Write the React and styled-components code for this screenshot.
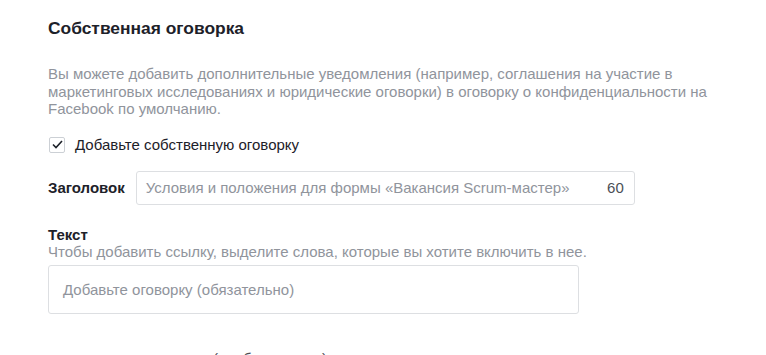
import React from 'react';
import styled, { createGlobalStyle } from 'styled-components';

const GlobalStyle = createGlobalStyle`
  body {
    margin: 0;
    background: #fff;
    font-family: "Liberation Sans", Arial, sans-serif;
    color: #1d2129;
  }
`;

const Page = styled.div`
  padding: 18px 0 0 48px;
  height: 355px;
  overflow: hidden;
  box-sizing: border-box;
`;

const Title = styled.h2`
  margin: 0;
  font-size: 17.4px;
  line-height: 20px;
  font-weight: bold;
  color: #1d2129;
`;

const Description = styled.p`
  margin: 27px 0 0;
  width: 690px;
  font-size: 15px;
  line-height: 17.5px;
  color: #90949c;
`;

const CheckRow = styled.label`
  display: flex;
  align-items: center;
  gap: 10px;
  margin-top: 18px;
  height: 18px;
  font-size: 15px;
  color: #1d2129;
`;

const Box = styled.span`
  width: 16px;
  height: 16px;
  border: 1px solid #ccd0d5;
  border-radius: 2px;
  display: flex;
  align-items: center;
  justify-content: center;
  box-sizing: border-box;
  margin-left: 1px;
`;

const FieldRow = styled.div`
  display: flex;
  align-items: center;
  gap: 11px;
  margin-top: 17px;
`;

const Label = styled.span`
  font-size: 15px;
  font-weight: bold;
  color: #1d2129;
  line-height: ${(p) => p.$lh || '18px'};
  display: block;
`;

const Input = styled.div`
  width: 499px;
  height: 34px;
  box-sizing: border-box;
  border: 1px solid #dddfe2;
  border-radius: 3px;
  display: flex;
  align-items: center;
  justify-content: space-between;
  padding: 0 10px 0 9px;
  font-size: 15px;
`;

const Placeholder = styled.span`
  color: #90949c;
`;

const Counter = styled.span`
  color: #4b4f56;
`;

const Section = styled.div`
  margin-top: 22px;
`;

const Hint = styled.div`
  font-size: 15px;
  line-height: 18px;
  color: #90949c;
`;

const TextArea = styled.div`
  margin-top: 4px;
  width: 531px;
  height: 49px;
  box-sizing: border-box;
  border: 1px solid #dddfe2;
  border-radius: 3px;
  display: flex;
  align-items: center;
  padding: 0 14px;
  font-size: 15px;
  color: #90949c;
`;

const Cut = styled.div`
  margin-top: 36px;
  padding-left: 165px;
  font-size: 15px;
  line-height: 18px;
  color: #4b4f56;
`;

export default function App() {
  return (
    <>
      <GlobalStyle />
      <Page>
        <Title>Собственная оговорка</Title>
        <Description>
          Вы можете добавить дополнительные уведомления (например, соглашения на участие в
          маркетинговых исследованиях и юридические оговорки) в оговорку о конфиденциальности на
          Facebook по умолчанию.
        </Description>
        <CheckRow>
          <Box>
            <svg width="11" height="9" viewBox="0 0 11 9">
              <path d="M1 4.5 L4 7.5 L10 1" fill="none" stroke="#1d2129" strokeWidth="1.6" />
            </svg>
          </Box>
          Добавьте собственную оговорку
        </CheckRow>
        <FieldRow>
          <Label>Заголовок</Label>
          <Input>
            <Placeholder>Условия и положения для формы «Вакансия Scrum-мастер»</Placeholder>
            <Counter>60</Counter>
          </Input>
        </FieldRow>
        <Section>
          <Label $lh="16px">Текст</Label>
          <Hint>Чтобы добавить ссылку, выделите слова, которые вы хотите включить в нее.</Hint>
          <TextArea>Добавьте оговорку (обязательно)</TextArea>
        </Section>
        <Cut>(необязательно)</Cut>
      </Page>
    </>
  );
}
